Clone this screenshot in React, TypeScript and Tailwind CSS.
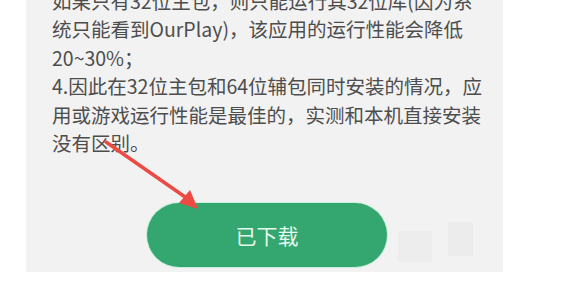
const lines = [
  "如果只有32位主包，则只能运行其32位库(因为系",
  "统只能看到OurPlay)，该应用的运行性能会降低",
  "20~30%；",
  "4.因此在32位主包和64位辅包同时安装的情况，应",
  "用或游戏运行性能是最佳的，实测和本机直接安装",
  "没有区别。",
];

export default function App() {
  return (
    <div
      className="relative w-[562px] h-[283px] overflow-hidden bg-white"
      style={{ fontFamily: '"Noto Sans CJK SC", "Noto Sans", sans-serif' }}
    >
      <div className="flow-root ml-[26px] w-[477px] h-[272px] bg-[#f2f2f2] pl-[26px]">
        {/* description text, first line is cut at the top */}
        <div className="-mt-[13px] text-[19.5px] leading-[28.4px] text-[#4d4d4d] whitespace-nowrap">
          {lines.map((line) => (
            <div key={line}>{line}</div>
          ))}
        </div>

        <div className="mt-[46px] ml-[95px] flex items-start">
          <button className="w-[240px] h-[64px] rounded-full bg-[#34a66f] text-[21px] text-[#e4f8ee] shadow-[0_0_0_1px_#c9eedb]">
            已下载
          </button>
          <div className="ml-[11px] mt-[28px] w-[34px] h-[31px] bg-[#ededed]" />
          <div className="ml-[16px] mt-[19px] w-[25px] h-[34px] bg-[#ececec]" />
        </div>
      </div>

      {/* red annotation arrow */}
      <svg
        className="absolute left-0 top-0 pointer-events-none"
        width="562"
        height="283"
        viewBox="0 0 562 283"
      >
        <line
          x1="106"
          y1="142"
          x2="188"
          y2="199"
          stroke="#ec4a43"
          strokeWidth="3.5"
          strokeLinecap="round"
        />
        <polygon points="198,209 179,203 190,190" fill="#ec4a43" />
      </svg>
    </div>
  );
}
